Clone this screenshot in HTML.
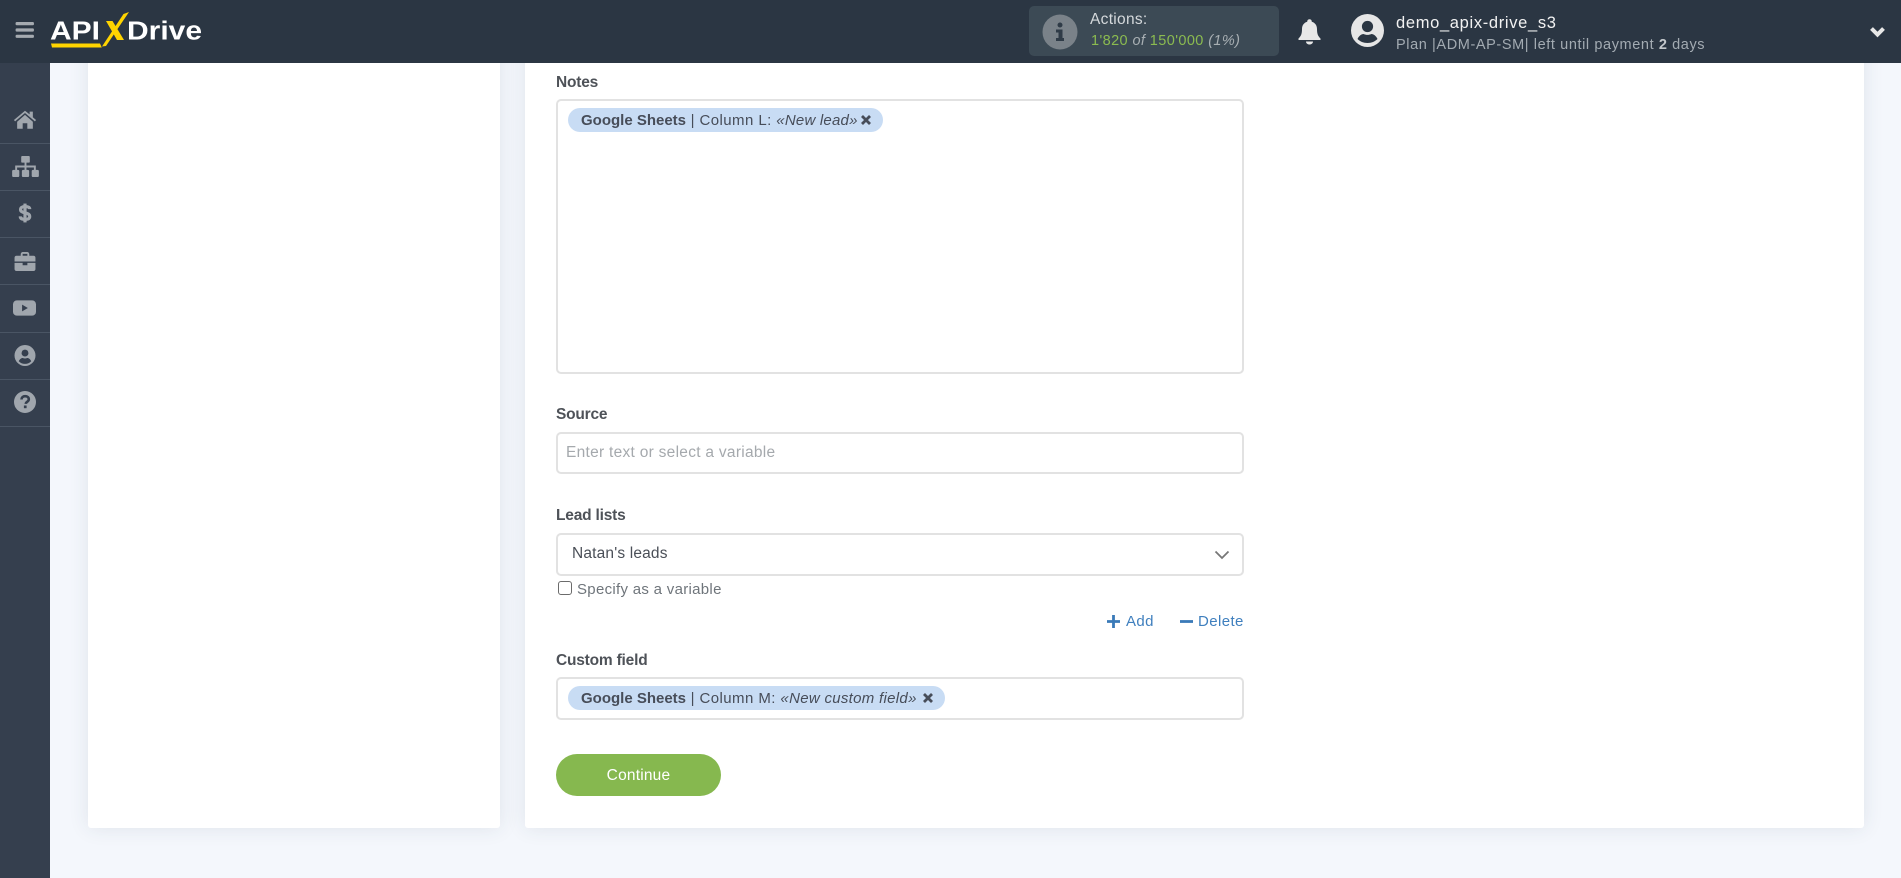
<!DOCTYPE html>
<html><head><meta charset="utf-8">
<style>
html,body{margin:0;padding:0;width:1901px;height:878px;overflow:hidden;background:#f4f7fc;font-family:"Liberation Sans",sans-serif;color:#444b55}
.a{position:absolute;white-space:nowrap}
.card{position:absolute;background:#fff;top:40px;height:788px;border-radius:0 0 3px 3px;box-shadow:0 0 20px rgba(40,55,80,.10)}
.label{position:absolute;left:556px;font-size:15.5px;font-weight:bold;color:#4e5258;white-space:nowrap;line-height:18px;letter-spacing:-.2px}
.field{position:absolute;left:556px;width:684px;background:#fff;border:2px solid #e2e2e2;border-radius:5px}
.chip{position:absolute;height:24px;line-height:26px;background:#c8dcf4;border-radius:12px;font-size:15px;color:#474d59;white-space:nowrap;box-sizing:border-box;padding-left:13px}
.chip b{letter-spacing:0}
.chip span{letter-spacing:.42px}
.chip i{letter-spacing:.22px}
.sep{position:absolute;left:0;width:50px;height:1px;background:#4a5564}
svg{position:absolute;overflow:visible}
</style></head><body>

<div class="card" style="left:88px;width:412px"></div>
<div class="card" style="left:525px;width:1339px"></div>

<!-- sidebar -->
<div class="a" style="left:0;top:63px;width:50px;height:815px;background:#353f4e"></div>
<div class="sep" style="top:143px"></div><div class="sep" style="top:190px"></div><div class="sep" style="top:237px"></div><div class="sep" style="top:284px"></div><div class="sep" style="top:332px"></div><div class="sep" style="top:379px"></div><div class="sep" style="top:426px"></div>

<svg style="left:13px;top:110px" width="24" height="19" viewBox="0 0 26 20" fill="#a0a6ad"><path d="M1 10.500 13 .5l5 4V1.500h3.500v6l3.500 3-1.300 1.500L13 3 2.300 12zM4.500 12.500 13 5l8.500 7.500V20H15.500v-6h-5v6H4.500z"/></svg>
<svg style="left:11.500px;top:156px" width="27" height="21" viewBox="0 0 28 22" fill="#a0a6ad"><rect x="9.500" y="0" width="9" height="7" rx="1"/><rect x="0" y="14.500" width="7.500" height="7.500" rx="1.500"/><rect x="10.200" y="14.500" width="7.600" height="7.500" rx="1.500"/><rect x="20.500" y="14.500" width="7.500" height="7.500" rx="1.500"/><path d="M13 6.500h2V10H24.800v5h-2v-3H15v3h-2v-3H5.200v3h-2v-5H13z"/></svg>
<svg style="left:19px;top:203px" width="12" height="20" viewBox="0 0 14 23" fill="none" stroke="#a0a6ad" stroke-width="3.700"><path d="M12.500 7C12.500 5 10.500 4 7 4S1.800 5.300 1.800 7.500 4 10.500 7 11.300 12.500 12.800 12.500 15.500 10.500 19 7 19 1.500 18 1.500 15.500"/><path d="M7 0.500V22.500"/></svg>
<svg style="left:14px;top:252px" width="22" height="19" viewBox="0 0 22 20" fill="#a0a6ad"><path d="M6.500 4V2.300C6.500 1 7.500 0 8.800 0h4.400c1.300 0 2.300 1 2.300 2.300V4H20c1.100 0 2 .9 2 2v4H0V6c0-1.100.9-2 2-2zM8.500 4h5V2h-5z"/><path d="M0 11.500h8.500V14h5v-2.500H22V18c0 1.100-.9 2-2 2H2c-1.100 0-2-.9-2-2z"/></svg>
<svg style="left:13px;top:300px" width="23" height="16" viewBox="0 0 24 16"><rect width="24" height="16" rx="4" fill="#a0a6ad"/><path d="M9.500 4.500 15.500 8l-6 3.500z" fill="#353f4e"/></svg>
<svg style="left:14px;top:345px" width="22" height="21" viewBox="0 0 22 22"><circle cx="11" cy="11" r="11" fill="#a0a6ad"/><circle cx="11" cy="8.500" r="3.600" fill="#353f4e"/><path d="M4.500 17c1-2.600 3-3.400 4.200-3.400.8.300 1.500.5 2.300.5s1.500-.2 2.300-.5c1.200 0 3.200.8 4.200 3.400-1.600 1.800-3.900 2.800-6.500 2.800S6.100 18.800 4.500 17z" fill="#353f4e"/></svg>
<svg style="left:14px;top:391px" width="22" height="22" viewBox="0 0 22 22"><circle cx="11" cy="11" r="11" fill="#a0a6ad"/><path d="M7.500 8.500C7.500 6.500 9 5.200 11.200 5.200c2 0 3.600 1.200 3.600 3 0 2.500-3 2.500-3 4.700" fill="none" stroke="#353f4e" stroke-width="2.600"/><rect x="9.900" y="14.500" width="2.700" height="2.700" fill="#353f4e"/></svg>

<!-- header -->
<div class="a" style="left:0;top:0;width:1901px;height:63px;background:#2b3643"></div>
<svg style="left:15px;top:22px" width="20" height="16" viewBox="0 0 20 17" fill="#a5aab0"><rect width="19.500" height="3.400" rx="1.200"/><rect y="6.800" width="19.500" height="3.400" rx="1.200"/><rect y="13.500" width="19.500" height="3.400" rx="1.200"/></svg>

<!-- logo -->
<svg style="left:50px;top:11px" width="155" height="38" viewBox="0 0 155 38">
<text x="0" y="28.500" font-family="Liberation Sans" font-weight="bold" font-size="25.500" fill="#fff" textLength="50" lengthAdjust="spacingAndGlyphs">API</text>
<text x="77" y="28.500" font-family="Liberation Sans" font-weight="bold" font-size="25.500" fill="#fff" textLength="75" lengthAdjust="spacingAndGlyphs">Drive</text>
<path d="M56 10h6.500L74 29h-7z" fill="#ffd400"/>
<path d="M52 35.500 73.500 3 79 1 56 35z" fill="#ffd400"/>
<path d="M1 32.500h49l1.800 4H2z" fill="#ffd400"/>
</svg>

<!-- actions -->
<div class="a" style="left:1029px;top:6px;width:250px;height:50px;background:#3c4a55;border-radius:5px"></div>
<svg style="left:1042px;top:14px" width="36" height="36" viewBox="0 0 36 36"><circle cx="18" cy="18" r="17.500" fill="#7a8289"/><circle cx="18" cy="11" r="2.500" fill="#2f3b47"/><path d="M14 15.500h6.500V24H22v3H14v-3h2.500v-5.500H14z" fill="#2f3b47"/></svg>
<div class="a" style="left:1090px;top:10px;font-size:15.500px;line-height:20px;color:#d5d9dc;letter-spacing:.3px">Actions:</div>
<div class="a" style="left:1091px;top:31px;font-size:14.500px;line-height:20px;color:#8bbb50;letter-spacing:.4px">1'820 <i style="color:#a8afb3">of</i> 150'000 <i style="color:#a8afb3">(1%)</i></div>

<svg style="left:1298px;top:19px" width="23" height="26" viewBox="0 0 23 26" fill="#e8e8e8"><circle cx="11.500" cy="2.500" r="2.300"/><path d="M11.500 2.500c4.500 0 7.500 3 7.500 7.500 0 5 1 7 3.500 9.500v1.500H.5v-1.500C3 17 4 15 4 10c0-4.500 3-7.500 7.500-7.500z"/><path d="M8 22.500h7c0 1.800-1.500 3-3.500 3S8 24.300 8 22.500z"/></svg>

<svg style="left:1351px;top:14px" width="33" height="33" viewBox="0 0 33 33"><circle cx="16.500" cy="16.500" r="16.500" fill="#e6e6e6"/><circle cx="16.500" cy="12.500" r="5.600" fill="#2b3643"/><path d="M6.500 25c1.500-3.600 4.500-5 6-5 1.300.5 2.700.9 4 .9s2.700-.4 4-.9c1.500 0 4.500 1.400 6 5-2.500 2.500-6 4-10 4s-7.500-1.500-10-4z" fill="#2b3643"/></svg>

<div class="a" style="left:1396px;top:12px;font-size:16.500px;line-height:22px;color:#f2f2f2;letter-spacing:.67px">demo_apix-drive_s3</div>
<div class="a" style="left:1396px;top:36px;font-size:14.500px;line-height:19px;color:#a3abb2;letter-spacing:.6px">Plan |ADM-AP-SM| left until payment <b style="color:#c4c8cc">2</b> days</div>

<svg style="left:1869px;top:26px" width="17" height="12" viewBox="0 0 17 12"><path d="M2.500 2.500 8.500 8.500 14.500 2.500" fill="none" stroke="#e8e8e8" stroke-width="4"/></svg>

<!-- form -->
<div class="label" style="top:74px">Notes</div>
<div class="field" style="top:99px;height:271px"></div>
<div class="chip" style="left:568px;top:108px;width:315px">
<b>Google Sheets</b><span> | Column L: </span><i>«New lead»</i>
<svg style="left:293px;top:6.500px" width="10" height="10" viewBox="0 0 10 10"><path d="M1 1 9 9M9 1 1 9" stroke="#474d59" stroke-width="2.800"/></svg></div>

<div class="label" style="top:406px">Source</div>
<div class="field" style="top:432px;height:38px"></div>
<div class="a" style="left:566px;top:444px;font-size:15.500px;line-height:18px;color:#a5a9ad;letter-spacing:.28px">Enter text or select a variable</div>

<div class="label" style="top:507px">Lead lists</div>
<div class="field" style="top:533px;height:39px"></div>
<div class="a" style="left:572px;top:545px;font-size:15.500px;line-height:18px;color:#4a4f57;letter-spacing:.17px">Natan's leads</div>
<svg style="left:1214px;top:550px" width="16" height="10" viewBox="0 0 16 10"><path d="M1.500 1.500 8 8 14.500 1.500" fill="none" stroke="#777" stroke-width="1.800"/></svg>
<div class="a" style="left:558px;top:581px;width:12px;height:12px;border:1.500px solid #6b6b6b;border-radius:3px;background:#fff"></div>
<div class="a" style="left:577px;top:581px;font-size:15px;line-height:18px;color:#6f757b;letter-spacing:.3px">Specify as a variable</div>

<svg style="left:1107px;top:615px" width="13" height="13" viewBox="0 0 13 13"><path d="M6.500 0v13M0 6.500h13" stroke="#3a7ab8" stroke-width="2.800"/></svg>
<div class="a" style="left:1126px;top:613px;font-size:15px;line-height:18px;color:#3f7fbe;letter-spacing:.4px">Add</div>
<svg style="left:1180px;top:620px" width="13" height="3" viewBox="0 0 13 3"><path d="M0 1.500h13" stroke="#3a7ab8" stroke-width="2.800"/></svg>
<div class="a" style="left:1198px;top:613px;font-size:15px;line-height:18px;color:#3f7fbe;letter-spacing:.4px">Delete</div>

<div class="label" style="top:652px">Custom field</div>
<div class="field" style="top:677px;height:39px"></div>
<div class="chip" style="left:568px;top:686px;width:377px">
<b>Google Sheets</b><span> | Column M: </span><i style="letter-spacing:.3px">«New custom field»</i>
<svg style="left:355px;top:6.500px" width="10" height="10" viewBox="0 0 10 10"><path d="M1 1 9 9M9 1 1 9" stroke="#474d59" stroke-width="2.800"/></svg></div>

<div class="a" style="left:556px;top:754px;width:165px;height:42px;line-height:43px;background:#86b84f;border-radius:21px;color:#fff;text-align:center;font-size:15.500px;letter-spacing:.2px">Continue</div>

</body></html>
